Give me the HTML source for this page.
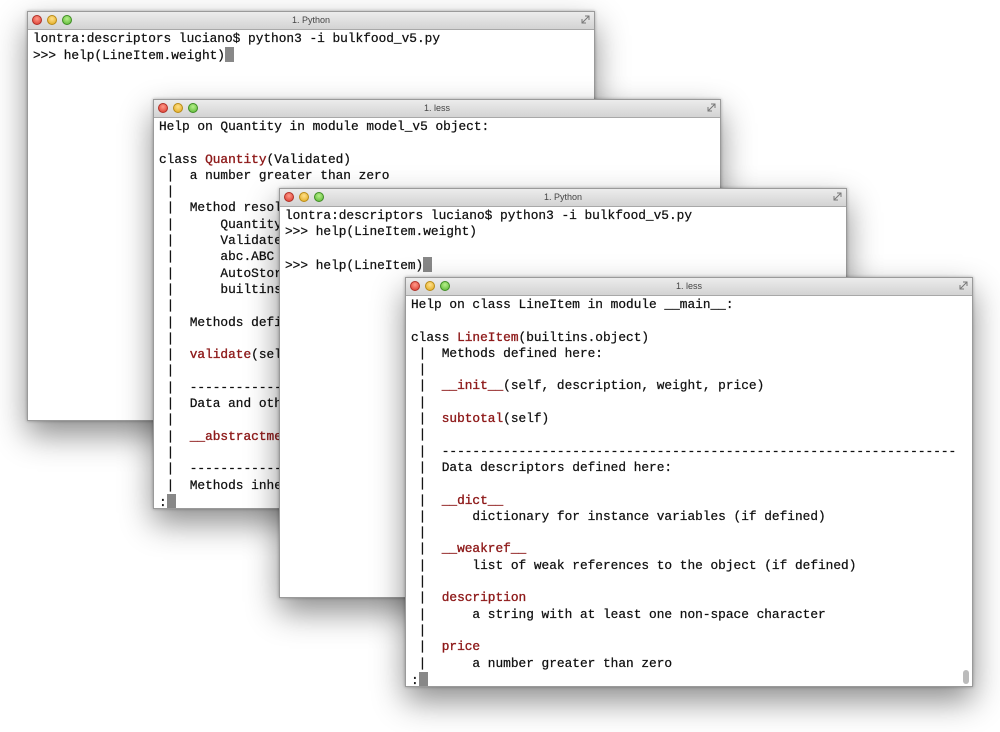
<!DOCTYPE html>
<html><head><meta charset="utf-8"><style>
html,body{margin:0;padding:0;background:#fff;width:1000px;height:732px;overflow:hidden;position:relative}
.w{position:absolute;width:568px;height:410px;background:#fff;border:1px solid #9a9a9a;box-sizing:border-box;box-shadow:0 14px 30px rgba(0,0,0,.45),0 0 3px rgba(0,0,0,.3);overflow:hidden}
.t{height:17px;background:linear-gradient(#ececec,#d3d3d3);border-bottom:1px solid #a8a8a8;position:relative;font:9px "Liberation Sans",sans-serif;color:#444;text-align:center;line-height:17px}
.d{position:absolute;top:3px;width:10px;height:10px;border-radius:50%;box-sizing:border-box}
.r{left:4px;background:radial-gradient(circle at 50% 35%,#ff9a8a,#d9372b);border:1px solid #b03027}
.y{left:19px;background:radial-gradient(circle at 50% 35%,#ffe08a,#e0a81b);border:1px solid #b88a16}
.g{left:34px;background:radial-gradient(circle at 50% 35%,#b6f08a,#58b532);border:1px solid #3f8c24}
.rs{position:absolute;right:4px;top:3px;width:9px;height:9px}
pre{margin:0;padding:1px 0 0 5px;font:12.8px/16.3px "Liberation Mono",monospace;color:#111;-webkit-text-stroke:0.25px #111}
.k{color:#8e1a1a;-webkit-text-stroke:0.35px #8e1a1a}
.c{background:#888;color:#888;display:inline-block;width:9px;height:15px;vertical-align:-3px}
.sb{position:absolute;right:3px;bottom:2px;width:6px;height:14px;background:#bbb;border-radius:3px}
</style></head><body>
<div class="w" style="left:27px;top:11px">
<div class="t"><span class="d r"></span><span class="d y"></span><span class="d g"></span>1. Python<svg class="rs" viewBox="0 0 9 9"><path d="M1 8L8 1M4 1h4v4M1 4v4h4" stroke="#777" fill="none"/></svg></div>
<pre>lontra:descriptors luciano$ python3 -i bulkfood_v5.py
&gt;&gt;&gt; help(LineItem.weight)<span class="c"></span></pre></div>

<div class="w" style="left:153px;top:99px">
<div class="t"><span class="d r"></span><span class="d y"></span><span class="d g"></span>1. less<svg class="rs" viewBox="0 0 9 9"><path d="M1 8L8 1M4 1h4v4M1 4v4h4" stroke="#777" fill="none"/></svg></div>
<pre>Help on Quantity in module model_v5 object:

class <span class="k">Quantity</span>(Validated)
 |  a number greater than zero
 |
 |  Method resolution order:
 |      Quantity
 |      Validated
 |      abc.ABC
 |      AutoStorage
 |      builtins.object
 |
 |  Methods defined here:
 |
 |  <span class="k">validate</span>(self, instance, value)
 |
 |  ----------------------------------------------
 |  Data and other attributes defined here:
 |
 |  <span class="k">__abstractmethods__</span> = frozenset()
 |
 |  ----------------------------------------------
 |  Methods inherited from Validated:
:<span class="c"></span></pre></div>

<div class="w" style="left:279px;top:188px">
<div class="t"><span class="d r"></span><span class="d y"></span><span class="d g"></span>1. Python<svg class="rs" viewBox="0 0 9 9"><path d="M1 8L8 1M4 1h4v4M1 4v4h4" stroke="#777" fill="none"/></svg></div>
<pre>lontra:descriptors luciano$ python3 -i bulkfood_v5.py
&gt;&gt;&gt; help(LineItem.weight)

&gt;&gt;&gt; help(LineItem)<span class="c"></span></pre></div>

<div class="w" style="left:405px;top:277px">
<div class="t"><span class="d r"></span><span class="d y"></span><span class="d g"></span>1. less<svg class="rs" viewBox="0 0 9 9"><path d="M1 8L8 1M4 1h4v4M1 4v4h4" stroke="#777" fill="none"/></svg></div>
<pre>Help on class LineItem in module __main__:

class <span class="k">LineItem</span>(builtins.object)
 |  Methods defined here:
 |
 |  <span class="k">__init__</span>(self, description, weight, price)
 |
 |  <span class="k">subtotal</span>(self)
 |
 |  -------------------------------------------------------------------
 |  Data descriptors defined here:
 |
 |  <span class="k">__dict__</span>
 |      dictionary for instance variables (if defined)
 |
 |  <span class="k">__weakref__</span>
 |      list of weak references to the object (if defined)
 |
 |  <span class="k">description</span>
 |      a string with at least one non-space character
 |
 |  <span class="k">price</span>
 |      a number greater than zero
:<span class="c"></span></pre><div class="sb"></div></div>
</body></html>
